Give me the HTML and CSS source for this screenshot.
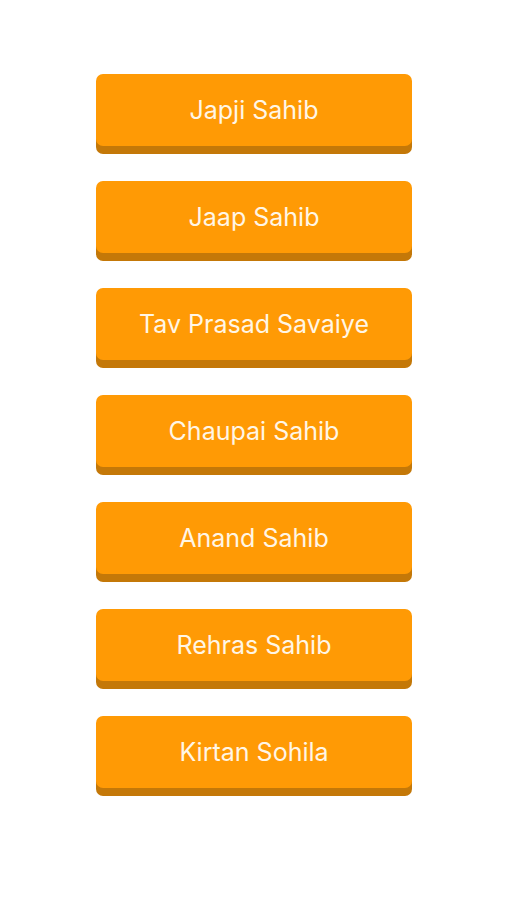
FILE: index.html
```html
<!DOCTYPE html>
<html lang="en">
<head>
    <meta charset="UTF-8">
    <meta name="viewport" content="width=device-width, initial-scale=1.0">
    <title>Nitnem</title>
    <link rel="stylesheet" href="styles.css">
</head>
<body>
    <div class="list">
        <button class="bani">Japji Sahib</button>
        <button class="bani">Jaap Sahib</button>
        <button class="bani">Tav Prasad Savaiye</button>
        <button class="bani">Chaupai Sahib</button>
        <button class="bani">Anand Sahib</button>
        <button class="bani">Rehras Sahib</button>
        <button class="bani">Kirtan Sohila</button>
    </div>
</body>
</html>
```

FILE: styles.css
```css
*{
    padding: 0px;
    margin: 0px;
    box-sizing: border-box;
}
body{
    background-color: #ffffff;
    font-family: Inter, "Noto Sans", sans-serif;
}
.list{
    display: flex;
    flex-direction: column;
    align-items: center;
    gap: 35px;
    padding: 74px 0px 100px 1px;
}
.bani{
    width: 316px;
    height: 72px;
    border: none;
    border-radius: 7px;
    background-color: #ff9a05;
    box-shadow: 0px 8px 0px #c47808;
    color: #fff6e6;
    font-family: inherit;
    font-size: 25px;
    letter-spacing: 0px;
}
```
